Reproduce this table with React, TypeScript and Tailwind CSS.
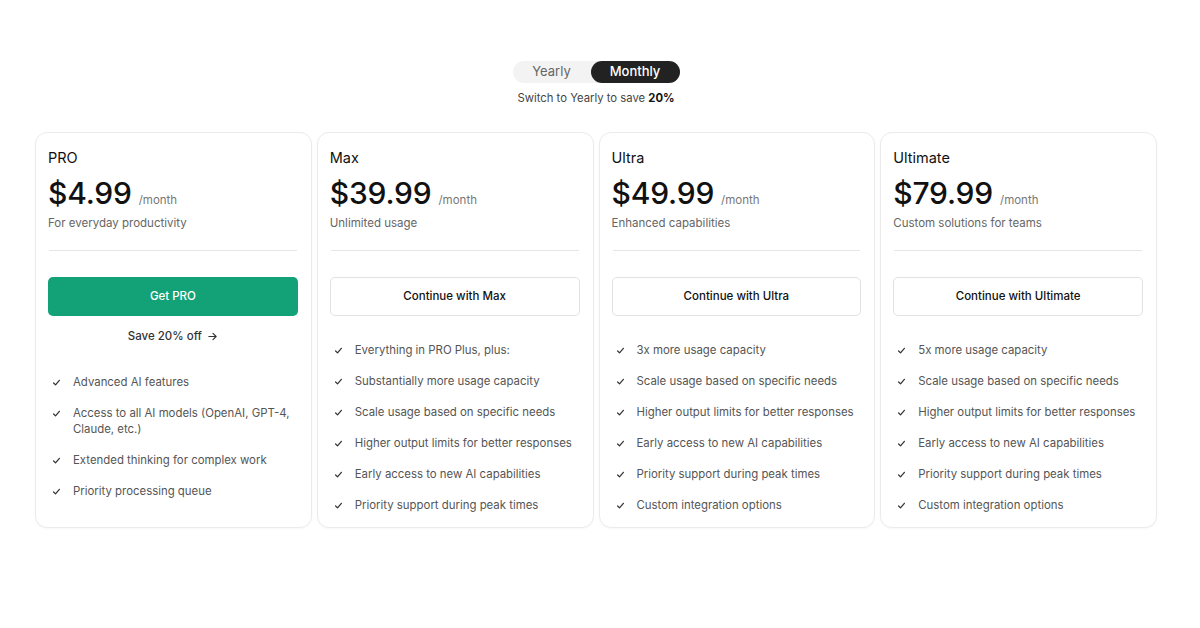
import React from "react";

type Plan = {
  name: string;
  price: string;
  desc: string;
  cta: string;
  primary?: boolean;
  features: string[];
};

const plans: Plan[] = [
  {
    name: "PRO",
    price: "$4.99",
    desc: "For everyday productivity",
    cta: "Get PRO",
    primary: true,
    features: [
      "Advanced AI features",
      "Access to all AI models (OpenAI, GPT-4, Claude, etc.)",
      "Extended thinking for complex work",
      "Priority processing queue",
    ],
  },
  {
    name: "Max",
    price: "$39.99",
    desc: "Unlimited usage",
    cta: "Continue with Max",
    features: [
      "Everything in PRO Plus, plus:",
      "Substantially more usage capacity",
      "Scale usage based on specific needs",
      "Higher output limits for better responses",
      "Early access to new AI capabilities",
      "Priority support during peak times",
    ],
  },
  {
    name: "Ultra",
    price: "$49.99",
    desc: "Enhanced capabilities",
    cta: "Continue with Ultra",
    features: [
      "3x more usage capacity",
      "Scale usage based on specific needs",
      "Higher output limits for better responses",
      "Early access to new AI capabilities",
      "Priority support during peak times",
      "Custom integration options",
    ],
  },
  {
    name: "Ultimate",
    price: "$79.99",
    desc: "Custom solutions for teams",
    cta: "Continue with Ultimate",
    features: [
      "5x more usage capacity",
      "Scale usage based on specific needs",
      "Higher output limits for better responses",
      "Early access to new AI capabilities",
      "Priority support during peak times",
      "Custom integration options",
    ],
  },
];

function Check() {
  return (
    <svg width="9" height="9" viewBox="0 0 10 10" className="shrink-0 mt-[4px]">
      <path d="M1.8 5.6 L3.9 7.6 L8.2 2.6" fill="none" stroke="#333" strokeWidth="1.4" strokeLinecap="round" strokeLinejoin="round" />
    </svg>
  );
}

function Card({ plan }: { plan: Plan }) {
  return (
    <div className="flex-1 rounded-[12px] border border-[#ebebeb] bg-white pl-[12px] pr-[13px] pt-[15px] pb-[14px] shadow-[0_1px_2px_rgba(0,0,0,0.03)]">
      <div className="text-[14.5px] leading-[20px] text-[#111]">{plan.name}</div>
      <div className="mt-[6px] flex items-baseline gap-[7px]">
        <span className="text-[30px] leading-[38px] font-medium tracking-[-0.2px] text-[#111]">{plan.price}</span>
        <span className="text-[11.5px] text-[#777]">/month</span>
      </div>
      <div className="mt-[2px] text-[11.5px] leading-[18px] text-[#666]">{plan.desc}</div>
      <div className="mt-[18px] mx-[1px] h-px bg-[#e6e6e6]" />
      {plan.primary ? (
        <>
          <button className="mt-[26px] flex h-[39px] w-full items-center justify-center rounded-[5px] bg-[#13a277] text-[11.5px] font-medium text-white">
            {plan.cta}
          </button>
          <div className="mt-[12px] flex items-center justify-center gap-[5px] text-[11.5px] leading-[16px] font-medium text-[#333]">
            Save 20% off
            <svg width="11" height="11" viewBox="0 0 12 12">
              <path d="M2 6 H10 M6.5 2.5 L10 6 L6.5 9.5" fill="none" stroke="#333" strokeWidth="1.2" strokeLinecap="round" strokeLinejoin="round" />
            </svg>
          </div>
          <div className="mt-[30px]" />
        </>
      ) : (
        <>
          <button className="mt-[26px] flex h-[39px] w-full items-center justify-center rounded-[5px] border border-[#e2e2e2] bg-white text-[11.5px] font-medium text-[#111]">
            {plan.cta}
          </button>
          <div className="mt-[26px]" />
        </>
      )}
      <ul className="flex flex-col gap-[15px] pl-[4px]">
        {plan.features.map((f) => (
          <li key={f} className="flex gap-[12px] text-[11.4px] leading-[16px] text-[#555]">
            <Check />
            <span>{f}</span>
          </li>
        ))}
      </ul>
    </div>
  );
}

export default function App() {
  return (
    <div
      className="min-h-[628px] w-full bg-white pl-[35px] pr-[43px] pt-[61px]"
      style={{ fontFamily: "Inter, 'Noto Sans', sans-serif" }}
    >
      <div className="flex flex-col items-center">
        <div className="flex h-[22px] items-center rounded-full bg-[#f3f3f3]">
          <div className="flex h-[22px] w-[78px] items-center justify-center text-[13px] text-[#666]">Yearly</div>
          <div className="flex h-[22px] w-[89px] items-center justify-center rounded-full bg-[#222] text-[13px] font-medium text-white">
            Monthly
          </div>
        </div>
        <div className="mt-[8px] text-[11.3px] leading-[14px] text-[#444]">
          Switch to Yearly to save <span className="font-bold text-[#111]">20%</span>
        </div>
      </div>
      <div className="mt-[27px] flex items-stretch gap-[5px]">
        {plans.map((p) => (
          <Card key={p.name} plan={p} />
        ))}
      </div>
    </div>
  );
}
